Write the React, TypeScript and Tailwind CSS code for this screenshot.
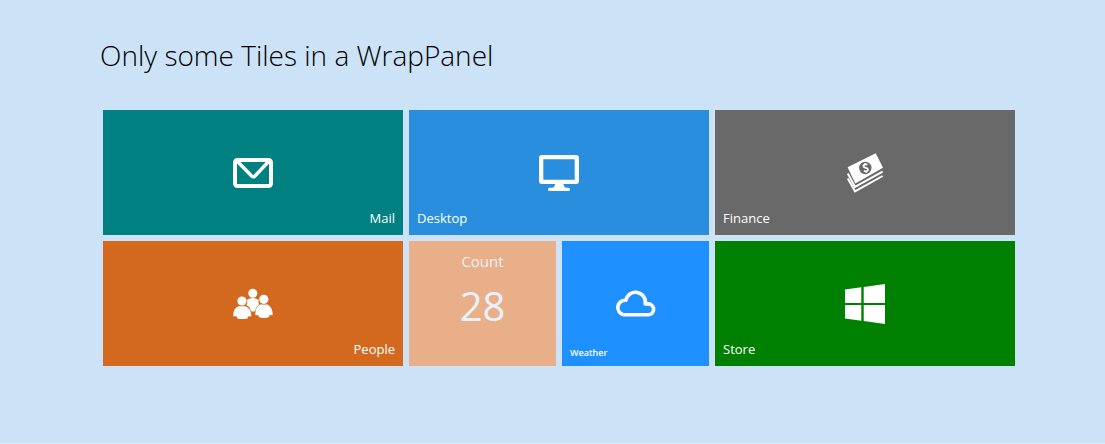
import type { ReactNode } from "react";

function MailIcon() {
  return (
    <svg viewBox="0 0 40 40" className="mx-auto h-10 w-10" fill="none" stroke="white" strokeWidth="4" aria-hidden="true">
      <rect x="2" y="7" width="36" height="26" rx="2.5" />
      <path d="M3.5 7.5 18.6 23Q20.3 24.6 22 23L36.5 7.5" strokeWidth="3.4" />
    </svg>
  );
}

function MonitorIcon() {
  return (
    <svg viewBox="0 0 40 40" className="mx-auto h-10 w-10" fill="white" aria-hidden="true">
      <path fillRule="evenodd" d="M3 2H37Q40 2 40 5V28Q40 31 37 31H3Q0 31 0 28V5Q0 2 3 2ZM4.3 6.3V26.7H35.7V6.3Z" />
      <path d="M16.3 30H24.3Q24.6 34 27 34.8H29.3Q31 35 31 36.5T29.3 38H10.7Q9 38 9 36.5T10.7 34.8H13.5Q16 34 16.3 30Z" />
    </svg>
  );
}

function MoneyIcon() {
  return (
    <svg viewBox="0 0 40 40" className="mx-auto h-10 w-10" fill="white" aria-hidden="true">
      <path fillRule="evenodd" d="M2.6 14.3 30.7 0.2 38 14.8 10.3 30.4ZM20.3 8.8A6.2 6.2 0 1 0 20.3 21.2 6.2 6.2 0 0 0 20.3 8.8Z" />
      <g fill="none" stroke="white" strokeWidth="2">
        <path d="M2.8 20.5 10 33.9 37.6 18.7" />
        <path d="M2.8 25.5 10 38.3 37.6 23" />
      </g>
      <g fill="none" stroke="white" strokeWidth="1.8">
        <path d="M22.3 11.8C20.5 10.6 17.8 11.8 18.6 13.7 19.4 15.3 22.4 14.4 22.9 16.3 23.3 18.3 20.4 19 18.9 17.8" />
        <path d="M19.6 10.2 20.3 12M21.2 18 21.9 19.8" strokeWidth="1.4" />
      </g>
    </svg>
  );
}

function PeopleIcon() {
  return (
    <svg viewBox="0 0 40 40" className="mx-auto h-10 w-10" fill="white" aria-hidden="true">
      <circle cx="19.8" cy="9.3" r="4.5" />
      <path d="M13.8 16Q16.5 14 19.8 14T25.8 16Q25 19 26.2 20.3 23.5 22.2 22.4 26.7Q19.8 28.5 17.6 26.7 17.3 23.2 13.5 21.3 15 18.5 13.8 16Z" />
      <g stroke="#d2691e" strokeWidth="0.8" className="[paint-order:stroke]">
        <path d="M5.4 22.2H12.6Q18 24.2 18.3 32.2L14.9 32.5V34.2Q9 36 4 34.2V32.5L0.2 32.2Q0.2 24.2 5.4 22.2Z" />
        <path d="M27.2 20.6H34.4Q39.6 23 39.8 31L36.2 31.3V33Q31 34.8 25.7 33V31.3L22.2 31Q22.2 23 27.2 20.6Z" />
        <circle cx="9" cy="17" r="4.6" />
        <circle cx="30.8" cy="15.3" r="4.6" />
      </g>
    </svg>
  );
}

function CloudIcon() {
  return (
    <svg viewBox="0 0 41 40" className="mx-auto h-10 w-[41px]" fill="none" stroke="white" strokeWidth="3.6" strokeLinejoin="round" aria-hidden="true">
      <path d="M8.6 30.7H33.2A5.4 5.4 0 0 0 33.2 19.9H30.2A9.8 9.8 0 0 0 10.9 16.3 7.3 7.3 0 0 0 8.6 30.7Z" />
    </svg>
  );
}

function WindowsIcon() {
  return (
    <svg viewBox="0 0 40 40" className="mx-auto h-10 w-10" fill="white" aria-hidden="true">
      <path d="M0 5.6 16.3 3.3V19H0ZM18.7 3 40 0V19H18.7ZM0 21H16.3V36.7L0 34.4ZM18.7 21H40V40L18.7 37Z" />
    </svg>
  );
}

type TileProps = {
  title: string;
  className: string;
  labelClass?: string;
  children: ReactNode;
};

function Tile({ title, className, labelClass = "text-left text-[13px] leading-5", children }: TileProps) {
  return (
    <button type="button" className={`flex min-h-[125px] cursor-pointer flex-col px-2 pt-[43px] pb-[7px] text-white ${className}`}>
      {children}
      <span className={`mt-auto w-full ${labelClass}`}>{title}</span>
    </button>
  );
}

export default function App() {
  return (
    <main className="min-h-screen border-b border-[#e0f1fc] bg-[#cce3f7] px-6 pt-8 pb-[77px] font-['Open_Sans','Noto_Sans',sans-serif] lg:pr-[90px] lg:pl-[100px]">
      <h1 className="text-[28px] leading-[46px] font-light text-black">Only some Tiles in a WrapPanel</h1>
      <div className="mt-8 grid grid-cols-2 gap-1.5 md:grid-cols-6 lg:ml-[3px]">
        <Tile title="Mail" className="col-span-2 bg-[#008080]" labelClass="text-right text-[13px] leading-5">
          <MailIcon />
        </Tile>
        <Tile title="Desktop" className="col-span-2 bg-[#2a8edf]">
          <MonitorIcon />
        </Tile>
        <Tile title="Finance" className="col-span-2 bg-[#696969]">
          <MoneyIcon />
        </Tile>
        <Tile title="People" className="col-span-2 bg-[#d2691e]" labelClass="text-right text-[13px] leading-5">
          <PeopleIcon />
        </Tile>
        <button type="button" className="flex min-h-[125px] cursor-pointer flex-col items-center bg-[#e9af89] pt-2 text-[#e9f2fb]">
          <span className="text-[15px] leading-6">Count</span>
          <span className="mt-1.5 text-[40px] leading-[54px]">28</span>
        </button>
        <Tile title="Weather" className="bg-[#1e90ff]" labelClass="text-left text-[9px] leading-3 font-semibold">
          <CloudIcon />
        </Tile>
        <Tile title="Store" className="col-span-2 bg-[#008000]">
          <WindowsIcon />
        </Tile>
      </div>
    </main>
  );
}
